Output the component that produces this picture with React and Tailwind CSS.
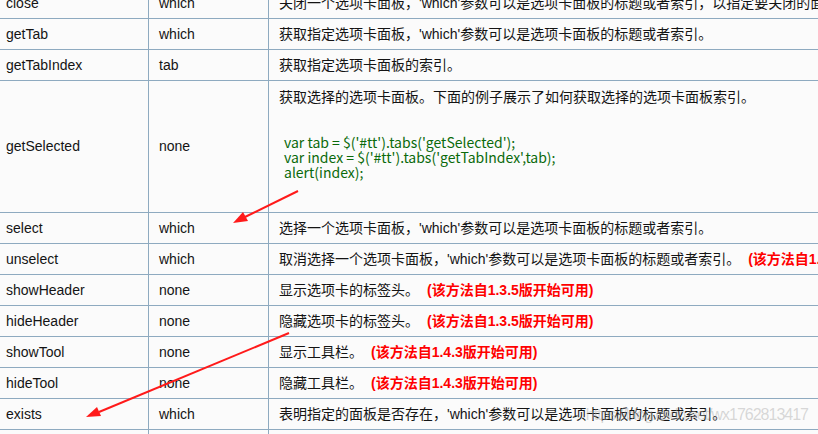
const red = 'font-bold text-[#ff0000]';

function Note({ v }) {
  return <span className={`ml-[8px] ${red}`}>(该方法自{v}版开始可用)</span>;
}

const rows = [
  { name: 'close', arg: 'which', desc: "关闭一个选项卡面板，'which'参数可以是选项卡面板的标题或者索引，以指定要关闭的面板。" },
  { name: 'getTab', arg: 'which', desc: "获取指定选项卡面板，'which'参数可以是选项卡面板的标题或者索引。" },
  { name: 'getTabIndex', arg: 'tab', desc: '获取指定选项卡面板的索引。' },
  { name: 'getSelected', arg: 'none', code: true },
  { name: 'select', arg: 'which', desc: "选择一个选项卡面板，'which'参数可以是选项卡面板的标题或者索引。" },
  { name: 'unselect', arg: 'which', desc: "取消选择一个选项卡面板，'which'参数可以是选项卡面板的标题或者索引。", note: '1.3.5' },
  { name: 'showHeader', arg: 'none', desc: '显示选项卡的标签头。', note: '1.3.5' },
  { name: 'hideHeader', arg: 'none', desc: '隐藏选项卡的标签头。', note: '1.3.5' },
  { name: 'showTool', arg: 'none', desc: '显示工具栏。', note: '1.4.3' },
  { name: 'hideTool', arg: 'none', desc: '隐藏工具栏。', note: '1.4.3' },
  { name: 'exists', arg: 'which', desc: "表明指定的面板是否存在，'which'参数可以是选项卡面板的标题或索引。" },
  { name: '', arg: '', desc: '' },
];

function Row({ r }) {
  return (
    <div className={`flex border-b border-[#8eaac0] ${r.code ? 'h-[132px]' : 'h-[31px]'}`}>
      <div className="flex w-[149px] shrink-0 items-center border-r border-[#8eaac0] pl-[6px]">{r.name}</div>
      <div className="flex w-[120px] shrink-0 items-center border-r border-[#8eaac0] pl-[10px]">{r.arg}</div>
      {r.code ? (
        <div className="flex-1 whitespace-nowrap pl-[10px] pt-[6px]">
          <div className="leading-[20px]">获取选择的选项卡面板。下面的例子展示了如何获取选择的选项卡面板索引。</div>
          <div className="mt-[28px] pl-[5px] font-['Noto_Sans_CJK_SC',sans-serif] text-[14px] leading-[15px] text-[#0b6a0b]">
            <div>var tab = $('#tt').tabs('getSelected');</div>
            <div>var index = $('#tt').tabs('getTabIndex',tab);</div>
            <div>alert(index);</div>
          </div>
        </div>
      ) : (
        <div className="flex flex-1 items-center whitespace-nowrap pl-[10px]">
          {r.desc}
          {r.note && <Note v={r.note} />}
        </div>
      )}
    </div>
  );
}

export default function App() {
  return (
    <div className="relative h-[434px] w-[818px] overflow-hidden bg-[#fbfbfb] font-['Liberation_Sans','Noto_Sans_CJK_SC',sans-serif] text-[14px] text-[#141414]">
      <div className="-mt-[12px]">
        {rows.map((r, i) => (
          <Row key={i} r={r} />
        ))}
      </div>

      <div className="absolute right-[10px] top-[403px] text-[16px] tracking-[-1px] text-[rgba(170,170,170,0.45)]">
        https://blog.csdn.net/wx1762813417
      </div>

      <svg className="absolute inset-0" width="818" height="434">
        <line x1="298" y1="191" x2="245" y2="217" stroke="#ff1a1a" strokeWidth="2" />
        <polygon points="233,223 248,221 243,212" fill="#ff1a1a" />
        <line x1="289" y1="333" x2="99" y2="412" stroke="#ff1a1a" strokeWidth="2" />
        <polygon points="86,417 101,416 97,407" fill="#ff1a1a" />
      </svg>
    </div>
  );
}
